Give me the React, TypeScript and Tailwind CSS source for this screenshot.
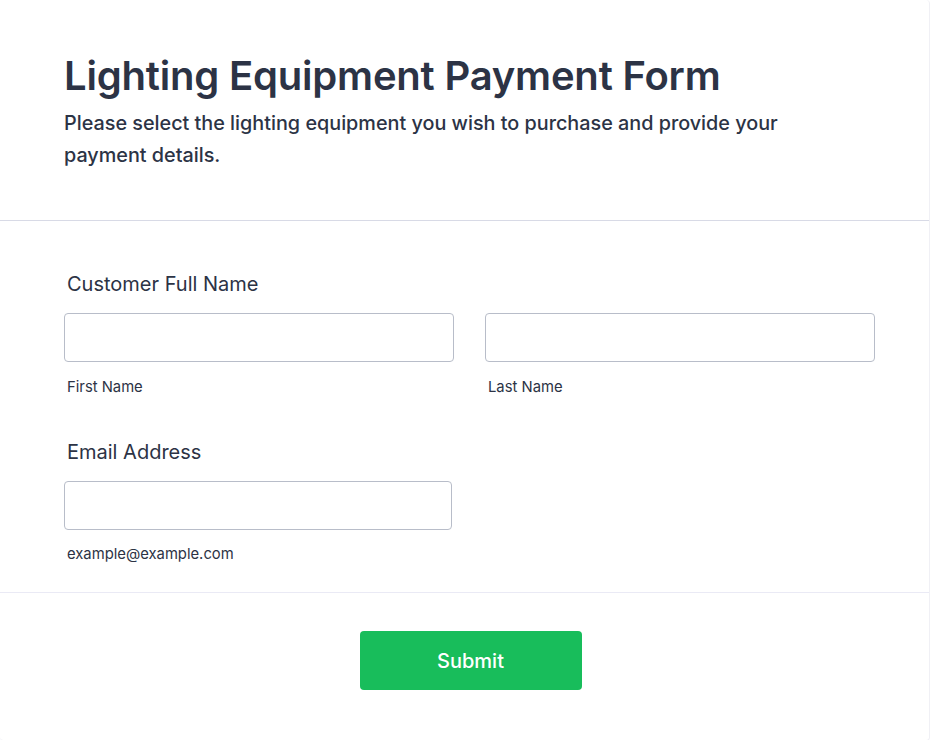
export default function App() {
  return (
    <div className="min-h-[740px] w-[930px] bg-white font-['Inter',sans-serif] text-[#2c3345]">
      <div className="w-[930px] rounded-[4px] border-r border-b border-[#f0f0f5] bg-white">
        <div className="border-b border-[#d8dae6] px-[64px] pt-[52px] pb-[49px]">
          <h1 className="text-[40px] font-semibold leading-[48px] tracking-[-0.2px]">
            Lighting Equipment Payment Form
          </h1>
          <p className="mt-[7px] max-w-[730px] text-[19.8px] font-medium leading-[32px]">
            Please select the lighting equipment you wish to purchase and provide your payment details.
          </p>
        </div>

        <div className="border-b border-[#eaeaf5] px-[64px] pt-[49px] pb-[28px]">
          <label className="block pl-[3px] text-[20px] font-normal leading-[28px]">Customer Full Name</label>
          <div className="mt-[15px] flex gap-[31px]">
            <div className="w-[390px] shrink-0">
              <input className="block h-[49px] w-full rounded-[4px] border border-[#b8bdc9] bg-white" />
              <span className="mt-[15px] block pl-[3px] text-[14.8px] leading-[20px]">First Name</span>
            </div>
            <div className="w-[390px] shrink-0">
              <input className="block h-[49px] w-full rounded-[4px] border border-[#b8bdc9] bg-white" />
              <span className="mt-[15px] block pl-[3px] text-[14.8px] leading-[20px]">Last Name</span>
            </div>
          </div>

          <label className="mt-[41px] block pl-[3px] text-[20px] font-normal leading-[28px]">Email Address</label>
          <div className="mt-[15px] w-[388px]">
            <input className="block h-[49px] w-full rounded-[4px] border border-[#b8bdc9] bg-white" />
            <span className="mt-[14px] block pl-[3px] text-[14.8px] leading-[20px]">example@example.com</span>
          </div>
        </div>

        <div className="flex justify-center pt-[38px] pb-[50px] pl-[12px]">
          <button
            type="button"
            className="h-[59px] w-[222px] rounded-[4px] bg-[#18bd5b] text-[20px] font-medium text-white"
          >
            Submit
          </button>
        </div>
      </div>
    </div>
  );
}
